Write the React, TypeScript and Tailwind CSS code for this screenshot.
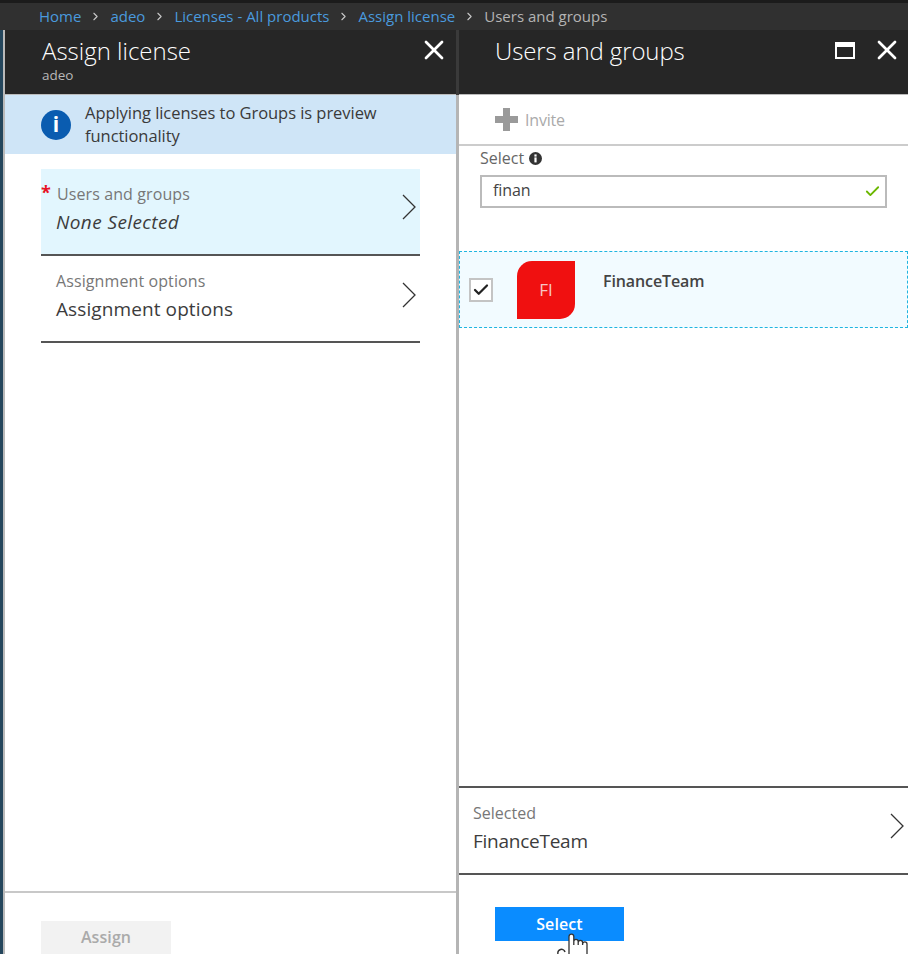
import { Check, ChevronRight, X } from 'lucide-react';

const FONT = "font-['Open_Sans','Noto_Sans',sans-serif]";

function BigChevron({ className }: { className?: string }) {
  return (
    <svg width="14" height="26" viewBox="0 0 14 26" className={className}>
      <path d="M1 1l12 12L1 25" fill="none" stroke="#333" strokeWidth="1.3" />
    </svg>
  );
}

function PickerRow({
  label,
  value,
  required,
  italic,
  active,
  chevronTop,
}: {
  label: string;
  value: string;
  required?: boolean;
  italic?: boolean;
  active?: boolean;
  chevronTop: string;
}) {
  return (
    <div className={`relative flex h-[87px] items-start border-b-2 border-[#555] pl-[15px] pt-[15px] ${active ? 'bg-[#e2f6fe]' : ''}`}>
      {required && <span className="absolute left-[0px] top-[14px] text-[18px] font-bold leading-none text-[#e81123]">*</span>}
      <div className="flex-1">
        <p className={`text-[16px] leading-[20px] tracking-[0.1px] text-[#777] ${required ? 'pl-[1px]' : ''}`}>{label}</p>
        <p className={`mt-[6px] text-[19px] leading-[24px] text-[#3c3c3c] ${italic ? 'italic tracking-[0.4px]' : 'tracking-[0.1px]'}`}>{value}</p>
      </div>
      <BigChevron className={`mr-[4px] ${chevronTop}`} />
    </div>
  );
}

function HandCursor() {
  return (
    <svg width="36" height="24" viewBox="0 0 36 24" className="absolute left-[555px] top-[930px]">
      <path
        d="M14 24V6.5a2.4 2.4 0 0 1 4.8 0V15V11.5a2.2 2.2 0 0 1 4.4 0V15V12.5a2.2 2.2 0 0 1 4.4 0V15V14a2.2 2.2 0 0 1 4.4 0V24"
        fill="#fff"
        stroke="#333"
        strokeWidth="1.3"
      />
      <path d="M3 24a3.6 3.6 0 0 1 7-2" fill="none" stroke="#333" strokeWidth="1.5" />
    </svg>
  );
}

export default function App() {
  return (
    <div className={`relative flex h-[954px] w-[908px] flex-col overflow-hidden bg-white ${FONT}`}>
      <nav className="flex h-[30px] shrink-0 items-center gap-[8px] border-t-[3px] border-[#1b1b1b] bg-[#303030] pl-[39px] text-[15px] text-[#4a9ade]">
        <span>Home</span>
        <ChevronRight size={13} className="text-[#c8c8c8]" />
        <span>adeo</span>
        <ChevronRight size={13} className="text-[#c8c8c8]" />
        <span>Licenses - All products</span>
        <ChevronRight size={13} className="text-[#c8c8c8]" />
        <span>Assign license</span>
        <ChevronRight size={13} className="text-[#c8c8c8]" />
        <span className="text-[#b4b4b4]">Users and groups</span>
      </nav>

      <div className="flex min-h-0 flex-1">
        <div className="w-[3px] shrink-0 bg-[#24465c]" />
        <div className="w-[2px] shrink-0 bg-[#b9b9b9]" />

        <section className="flex w-[451px] shrink-0 flex-col">
          <header className="flex h-[65px] shrink-0 items-start border-b border-[#bbb] bg-[#262626] pl-[37px] pt-[5px]">
            <div className="flex-1">
              <h1 className="text-[24px] font-light leading-[32px] text-white">Assign license</h1>
              <p className="text-[13.5px] leading-[16px] text-[#b8b8b8]">adeo</p>
            </div>
            <X size={32} strokeWidth={2} className="mr-[6px] mt-[-1px] text-white" />
          </header>

          <div className="flex h-[59px] shrink-0 items-center gap-[14px] bg-[#cfe5f7] pl-[36px]">
            <span className="flex h-[30px] w-[30px] shrink-0 items-center justify-center rounded-full bg-[#0a5cb0]">
              <span className="text-[21px] font-bold leading-none text-white">i</span>
            </span>
            <p className="mb-[2px] w-[340px] text-[16.5px] leading-[23px] tracking-[-0.05px] text-[#3a3a3a]">
              Applying licenses to Groups is preview functionality
            </p>
          </div>

          <div className="mx-[36px] mt-[15px]">
            <PickerRow label="Users and groups" value="None Selected" required italic active chevronTop="mt-[10px]" />
            <PickerRow label="Assignment options" value="Assignment options" chevronTop="mt-[11px]" />
          </div>

          <footer className="mt-auto h-[63px] shrink-0 border-t-2 border-[#c8c8c8] pl-[36px] pt-[28px]">
            <button className="h-[33px] w-[130px] bg-[#f2f2f2] pb-[2px] text-[16px] font-semibold tracking-[0.1px] text-[#aaa]">Assign</button>
          </footer>
        </section>

        <div className="flex w-[3px] shrink-0 flex-col">
          <div className="h-[65px] bg-[#3a3a3a]" />
          <div className="flex-1 bg-[#b5b5b5]" />
        </div>

        <section className="flex min-w-0 flex-1 flex-col">
          <header className="flex h-[65px] shrink-0 items-start border-b border-[#bbb] bg-[#262626] pl-[36px] pt-[5px]">
            <h2 className="flex-1 text-[24px] font-light leading-[32px] tracking-[-0.1px] text-white">Users and groups</h2>
            <svg width="20" height="17" viewBox="0 0 20 17" className="mr-[16px] mt-[7px]">
              <path d="M1 1h18v15H1z" fill="none" stroke="#fff" strokeWidth="2" />
              <rect x="1" y="1" width="18" height="4" fill="#fff" />
            </svg>
            <X size={32} strokeWidth={2} className="mr-[5px] mt-[-1px] text-white" />
          </header>

          <div className="flex h-[51px] shrink-0 items-center gap-[7px] border-b-2 border-[#ccc] pl-[36px]">
            <svg width="23" height="23" viewBox="0 0 23 23">
              <path d="M8 0h7v8h8v7h-8v8H8v-8H0V8h8z" fill="#9a9a9a" />
            </svg>
            <span className="text-[16px] tracking-[-0.2px] text-[#aaa]">Invite</span>
          </div>

          <div className="shrink-0 px-[21px]">
            <div className="flex items-center gap-[5px]">
              <span className="text-[16px] leading-[24px] text-[#666]">Select</span>
              <svg width="13" height="13" viewBox="0 0 13 13">
                <circle cx="6.5" cy="6.5" r="6.5" fill="#333" />
                <rect x="5.4" y="2.4" width="2.2" height="2.2" fill="#fff" />
                <rect x="5.4" y="5.4" width="2.2" height="5" fill="#fff" />
              </svg>
            </div>
            <div className="mt-[5px] flex h-[33px] items-center justify-between border-2 border-[#bbb] pb-[3px] pl-[11px] pr-[4px]">
              <span className="text-[16px] tracking-[-0.1px] text-[#444]">finan</span>
              <Check size={17} strokeWidth={2.6} className="mt-[3px] text-[#6bb700]" />
            </div>
          </div>

          <div className="mt-[43px] flex h-[77px] shrink-0 items-center border border-dashed border-[#1fb5e0] bg-[#f2fbff] pl-[9px]">
            <span className="flex h-[24px] w-[24px] items-center justify-center border-2 border-[#c4c4c4] bg-white">
              <Check size={18} strokeWidth={3} className="text-[#222]" />
            </span>
            <span className="ml-[24px] flex h-[58px] w-[58px] items-center justify-center rounded-tl-[15px] rounded-br-[15px] bg-[#f01010] text-[17px] text-[#f8c4c4]">
              FI
            </span>
            <span className="mb-[18px] ml-[28px] text-[16px] font-semibold tracking-[-0.1px] text-[#444]">FinanceTeam</span>
          </div>

          <div className="mt-auto flex h-[89px] shrink-0 items-start border-y-2 border-[#555] pl-[14px] pt-[15px]">
            <div className="flex-1">
              <p className="text-[16px] leading-[20px] text-[#777]">Selected</p>
              <p className="mt-[6px] text-[19px] leading-[24px] tracking-[-0.25px] text-[#3c3c3c]">FinanceTeam</p>
            </div>
            <BigChevron className="mr-[4px] mt-[10px]" />
          </div>

          <div className="h-[79px] shrink-0 pl-[36px] pt-[32px]">
            <button className="h-[34px] w-[129px] bg-[#0a8cff] text-[16px] font-semibold tracking-[0.1px] text-white">Select</button>
          </div>
        </section>
      </div>

      <HandCursor />
    </div>
  );
}
